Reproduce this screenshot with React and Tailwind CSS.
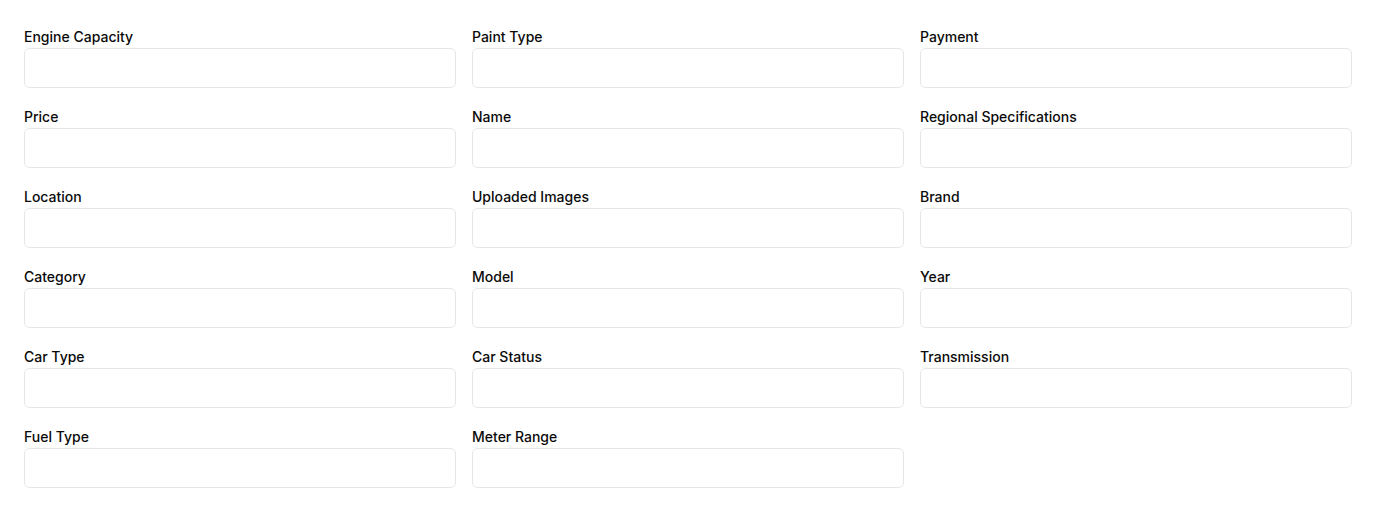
import React from "react";

const fields = [
  "Engine Capacity", "Paint Type", "Payment",
  "Price", "Name", "Regional Specifications",
  "Location", "Uploaded Images", "Brand",
  "Category", "Model", "Year",
  "Car Type", "Car Status", "Transmission",
  "Fuel Type", "Meter Range",
];

export default function App() {
  return (
    <div className="min-h-[512px] bg-white px-6 pt-[27px] pb-6" style={{ fontFamily: "Inter, 'Liberation Sans', sans-serif" }}>
      <div className="grid grid-cols-3 gap-x-4 gap-y-[19px]">
        {fields.map((f) => (
          <div key={f} className="flex flex-col">
            <label className="text-sm leading-5 font-medium text-[#0a0a0a]">{f}</label>
            <input className="mt-px h-10 w-full rounded-md border border-[#e5e5e5] bg-white px-3 text-sm outline-none" />
          </div>
        ))}
      </div>
    </div>
  );
}
